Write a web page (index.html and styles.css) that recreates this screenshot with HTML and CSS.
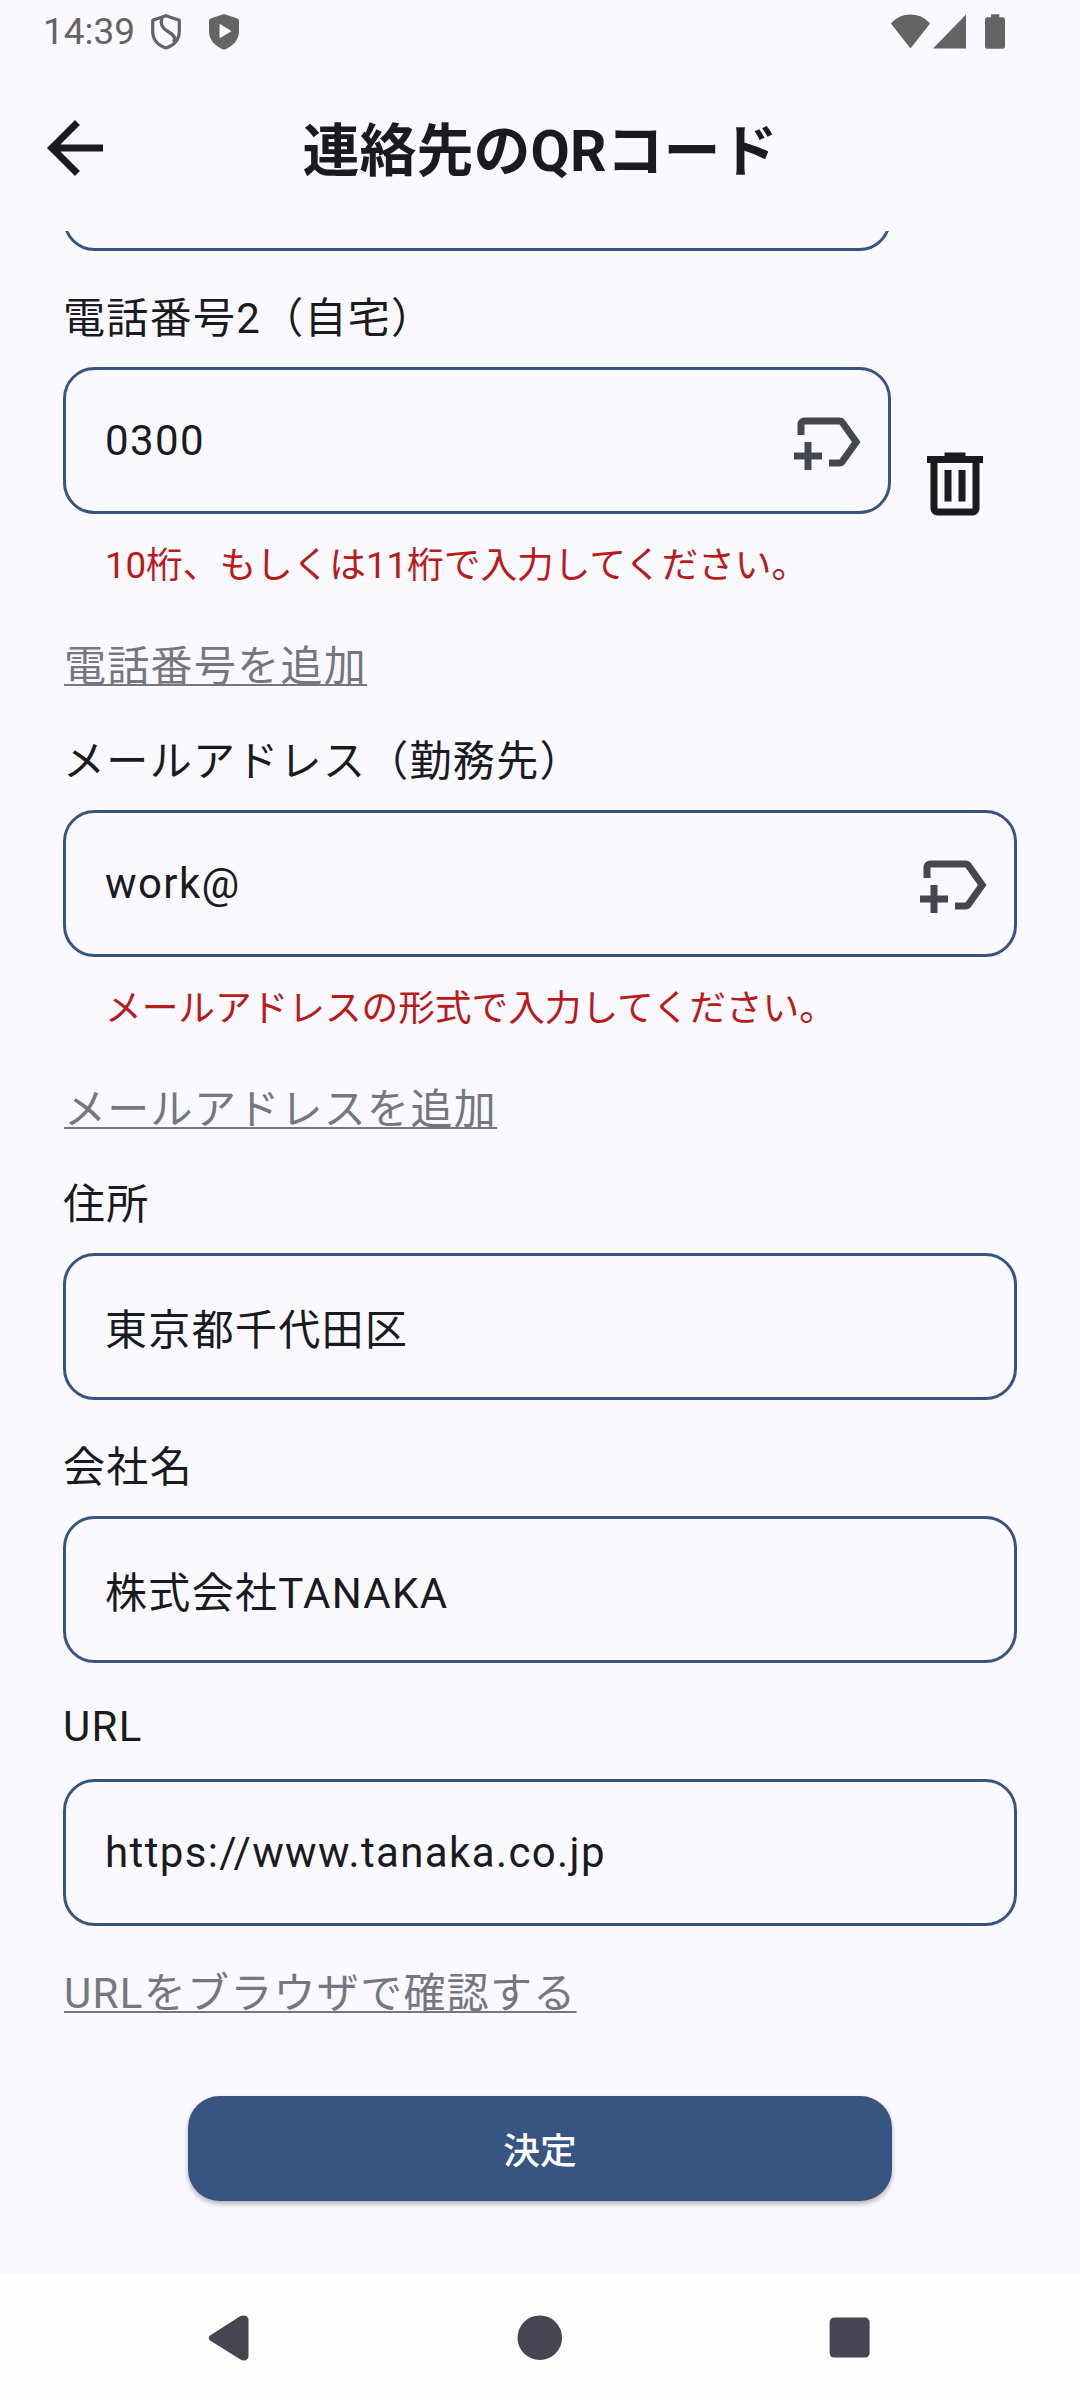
FILE: index.html
```html
<!DOCTYPE html>
<html lang="ja">
<head>
<meta charset="utf-8">
<title>連絡先のQRコード</title>
<link rel="stylesheet" href="styles.css">
</head>
<body>
<div class="screen">
  <div class="status">
    <span class="clock">14:39</span>
    <svg class="status-shield" width="30" height="36" viewBox="0 0 30 36"><path d="M15 1.700 28.300 6.300V17C28.300 26 22.500 31.500 15 34 7.500 31.500 1.700 26 1.700 17V6.300Z" fill="none" stroke="currentColor" stroke-width="3.200" stroke-linejoin="round"/><path d="M11 4C8.500 11 12 14.500 17 17.500 22 20.500 25.500 23.500 22.500 28" fill="none" stroke="currentColor" stroke-width="3.400"/></svg>
    <svg class="status-play" width="30" height="36" viewBox="0 0 30 38" preserveAspectRatio="none"><path fill="currentColor" fill-rule="evenodd" d="M13.800.4Q15-.1 16.200.4L28 4.600Q30 5.300 30 7V18.500C30 27.500 23.500 34.500 15 37.700 6.500 34.500 0 27.500 0 18.500V7Q0 5.300 2 4.600ZM10.500 11.300V24.600Q10.500 25.600 11.500 25L21.500 18.800Q22.400 18.100 21.500 17.500L11.500 10.900Q10.500 10.300 10.500 11.300Z"/></svg>
    <span class="grow"></span>
    <svg class="status-wifi" width="39" height="35" viewBox="0 0 40 35" preserveAspectRatio="none"><path fill="currentColor" d="M20 34.500.3 10Q0 9.300.5 8.800 8.500.4 20 .4T39.500 8.800Q40 9.300 39.700 10Z"/></svg>
    <svg class="status-cell" width="33" height="35" viewBox="0 0 33 35"><path fill="currentColor" d="M0 34.500 33 .5V34.500Z"/></svg>
    <svg class="status-battery" width="20" height="35" viewBox="0 0 20 35"><path fill="currentColor" d="M6 .3h8.300V3.300H17.500Q20 3.300 20 5.800V32.500Q20 34.700 17.800 34.700H2.200Q0 34.700 0 32.500V5.800Q0 3.300 2.500 3.300H6Z"/></svg>
  </div>

  <header class="appbar">
    <svg class="back" width="84" height="84" viewBox="0 0 24 24"><path fill="currentColor" d="M20 11H7.830l5.590-5.590L12 4l-8 8 8 8 1.410-1.410L7.830 13H20v-2z"/></svg>
    <h1>連絡先のQRコード</h1>
  </header>

  <main class="form">
    <div class="field field-short field-cut"></div>

    <div class="label">電話番号2（自宅）</div>
    <div class="row">
      <div class="field field-short">
        <span class="value latin">0300</span>
        <svg class="tag" width="84" height="84" viewBox="0 0 24 24"><path fill="currentColor" d="M21 12l-4.370 6.160C16.260 18.680 15.650 19 15 19h-3v-2h3l3.550-5L15 7H5v3H3V7c0-1.100.9-2 2-2h10c.65 0 1.260.31 1.630.84L21 12zM10 15H7v-3H5v3H2v2h3v3h2v-3h3v-2z"/></svg>
      </div>
      <svg class="trash" width="84" height="84" viewBox="0 0 24 24"><path fill="currentColor" fill-rule="evenodd" d="M7 21q-.825 0-1.412-.587Q5 19.825 5 19V6H4V4h5V3h6v1h5v2h-1v13q0 .825-.587 1.413Q17.825 21 17 21ZM17 6H7v13h10ZM9 17h2V8H9Zm4 0h2V8h-2Z"/></svg>
    </div>
    <p class="error">10桁、もしくは11桁で入力してください。</p>
    <a class="link">電話番号を追加</a>

    <div class="label after-link">メールアドレス（勤務先）</div>
    <div class="field">
      <span class="value latin">work@</span>
      <svg class="tag" width="84" height="84" viewBox="0 0 24 24"><path fill="currentColor" d="M21 12l-4.370 6.160C16.260 18.680 15.650 19 15 19h-3v-2h3l3.550-5L15 7H5v3H3V7c0-1.100.9-2 2-2h10c.65 0 1.260.31 1.630.84L21 12zM10 15H7v-3H5v3H2v2h3v3h2v-3h3v-2z"/></svg>
    </div>
    <p class="error">メールアドレスの形式で入力してください。</p>
    <a class="link">メールアドレスを追加</a>

    <div class="label after-link">住所</div>
    <div class="field"><span class="value">東京都千代田区</span></div>

    <div class="label">会社名</div>
    <div class="field"><span class="value">株式会社TANAKA</span></div>

    <div class="label label-latin">URL</div>
    <div class="field"><span class="value latin">https://www.tanaka.co.jp</span></div>
    <a class="link link-url">URLをブラウザで確認する</a>
  </main>

  <footer class="actions"><button class="submit" type="button">決定</button></footer>

  <nav class="navbar">
    <svg width="42" height="46" viewBox="0 0 42 46"><path fill="currentColor" d="M2 20.500 32.500 1Q35 0 37.500.8 40.500 2 40.500 5V41Q40.500 44 37.500 45.200 35 46 32.500 44.600L2 25.500Q-.5 23 2 20.500Z"/></svg>
    <svg width="46" height="46" viewBox="0 0 46 46"><circle cx="22.800" cy="22.700" r="22.300" fill="currentColor"/></svg>
    <svg width="42" height="42" viewBox="0 0 42 42"><rect x=".6" y=".6" width="40" height="40" rx="4.500" fill="currentColor"/></svg>
  </nav>
</div>
</body>
</html>
```
FILE: styles.css
```css
* { box-sizing: border-box; }

body {
  margin: 0;
  background: #faf9ff;
  color: #1a1b20;
  font-family: Roboto, "Noto Sans CJK JP", sans-serif;
}

svg { display: block; flex: none; }

.screen {
  width: 1080px;
  height: 2400px;
  display: flex;
  flex-direction: column;
  overflow: hidden;
}

/* system status bar */
.status {
  height: 64px;
  padding: 14px 75px 0 43px;
  display: flex;
  align-items: flex-start;
  color: #646464;
}
.clock {
  width: 107.5px;
  font-size: 37px;
  line-height: 36px;
}
.status-play { margin: -.5px 0 0 28px; }
.grow { flex: 1; }
.status-cell { margin-left: 3px; }
.status-battery { margin-left: 19px; }

/* title bar */
.appbar {
  height: 167px;
  padding: 42px 117px 0 33px;
  display: flex;
  align-items: flex-start;
}
.appbar h1 {
  flex: 1;
  margin: 0;
  padding-top: 4px;
  text-align: center;
  font-size: 57px;
  line-height: 84px;
  font-weight: 700;
}

/* scrolling form */
.form {
  height: 1805px;
  padding: 0 63px;
  display: flex;
  flex-direction: column;
  align-items: stretch;
  overflow: hidden;
}
.field {
  height: 147px;
  flex: none;
  border: 3px solid #385582;
  border-radius: 31.5px;
  padding: 0 17px 0 39px;
  display: flex;
  align-items: flex-start;
  justify-content: space-between;
}
.field-short { width: 828px; }
.field-cut { margin-top: -127px; }
.row { display: flex; height: 147px; }
.value {
  padding-top: 44px;
  font-size: 42px;
  line-height: 62px;
  letter-spacing: 1.3125px;
}
.value.latin { padding-top: 40px; letter-spacing: 1.380px; }
.tag { margin-top: 29.700px; color: #44474f; }
.trash { margin: 75px 0 0 22px; }
.label {
  height: 116px;
  flex: none;
  padding-top: 37px;
  font-size: 42px;
  line-height: 62px;
  letter-spacing: 1.3125px;
}
.label.after-link { height: 94px; padding-top: 15px; }
.label.label-latin { padding-top: 33px; }
.error {
  height: 114px;
  flex: none;
  margin: 0;
  padding: 25px 0 0 42px;
  color: #ba1a1a;
  font-size: 36.75px;
  line-height: 54px;
  letter-spacing: -.1px;
}
.link {
  height: 88px;
  flex: none;
  padding: 8px 0 0 1px;
  color: #757780;
  font-size: 42px;
  line-height: 62px;
  letter-spacing: 1.3px;
  text-decoration: underline;
  text-decoration-thickness: 2px;
  text-decoration-skip-ink: none;
  text-underline-offset: 3px;
}
.link-url { margin-top: 29px; }

.actions {
  height: 238px;
  padding-top: 60px;
  display: flex;
  justify-content: center;
  align-items: flex-start;
}
.submit {
  width: 704px;
  height: 105px;
  border: 0;
  padding: 7px 0 0;
  border-radius: 31.5px;
  background: #385582;
  color: #fff;
  font: 500 36.75px/54px Roboto, "Noto Sans CJK JP", sans-serif;
  box-shadow: 0 3px 5px rgba(0, 0, 0, .28);
}

/* system navigation bar */
.navbar {
  height: 126px;
  padding: 2px 209px 0 208px;
  display: flex;
  justify-content: space-between;
  align-items: center;
  background: #fefefe;
  color: #474551;
}
```
